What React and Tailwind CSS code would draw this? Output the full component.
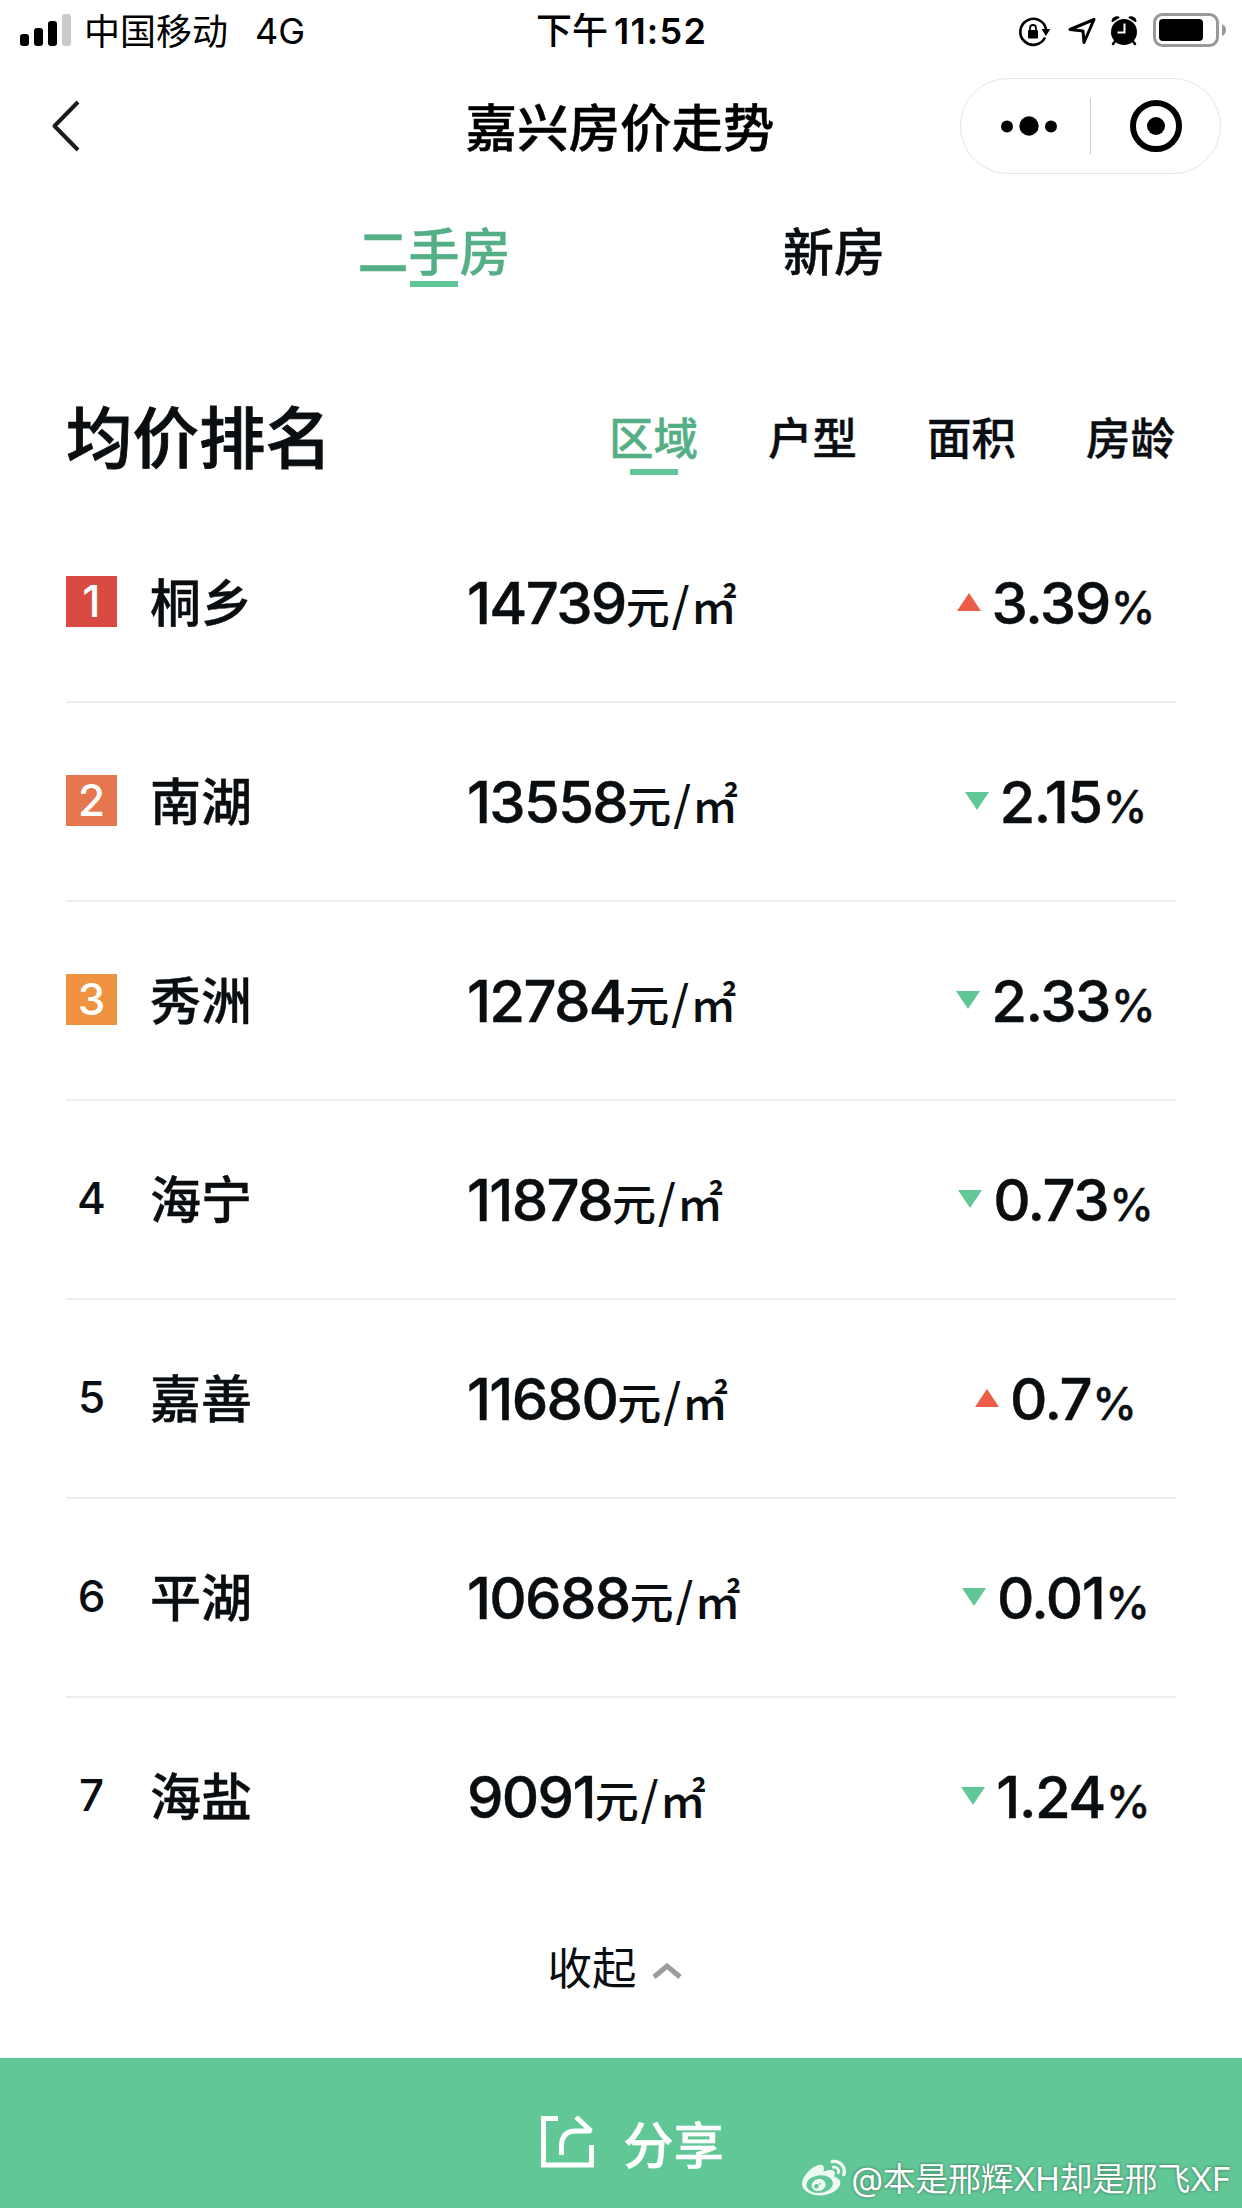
import React, { useState } from 'react';
import { FaWeibo } from 'react-icons/fa';

const districts = [
  { name: '桐乡', price: 14739, change: 3.39, up: true },
  { name: '南湖', price: 13558, change: 2.15, up: false },
  { name: '秀洲', price: 12784, change: 2.33, up: false },
  { name: '海宁', price: 11878, change: 0.73, up: false },
  { name: '嘉善', price: 11680, change: 0.7, up: true },
  { name: '平湖', price: 10688, change: 0.01, up: false },
  { name: '海盐', price: 9091, change: 1.24, up: false },
];

const filters = ['区域', '户型', '面积', '房龄'];

const badgeColors = ['bg-[#d84a42] text-white', 'bg-[#e6764d] text-white', 'bg-[#f09340] text-white'];

const StatusBar = () => (
  <div className="flex h-[62px] shrink-0 items-center text-[36px] leading-[62px] text-black">
    <svg className="ml-5 h-[62px] w-[51px] shrink-0" viewBox="0 0 51 62">
      <rect x="0" y="34" width="9" height="12" rx="3" />
      <rect x="14" y="28" width="9" height="18" rx="3" />
      <rect x="28" y="21" width="9" height="25" rx="3" />
      <rect x="42" y="14" width="9" height="32" rx="3" fill="#cbcbcb" />
    </svg>
    <span className="ml-[13px] w-[144px] pt-px">中国移动</span>
    <span className="ml-[27px] w-[50px]">4G</span>
    <span className="ml-[231px] flex w-[178px] font-semibold">
      <span className="font-medium">下午</span>
      <span className="ml-[6px] tracking-[1.2px]">11:52</span>
    </span>
    <svg className="ml-auto h-[62px] w-[224px] shrink-0" viewBox="0 0 224 62" fill="none">
      {/* rotation lock */}
      <path d="M27 37.5A13 13 0 1 1 28 29" stroke="#000" strokeWidth="2.6" />
      <path d="M23.500 29h8.800l-4.400 7z" fill="#000" />
      <rect x="10" y="30" width="10" height="8.500" rx="1" fill="#000" />
      <path d="M12 30v-2a3 3 0 0 1 6 0v2" stroke="#000" strokeWidth="1.800" />
      {/* location */}
      <path d="M76 19.500L52 29.500L65 31L66 42.500z" stroke="#000" strokeWidth="3" strokeLinejoin="round" />
      {/* alarm */}
      <circle cx="106" cy="32" r="13" fill="#000" />
      <path d="M94.500 21a4.500 4.500 0 0 1 6-3.500zM117.500 21a4.500 4.500 0 0 0-6-3.500z" fill="#000" stroke="#000" strokeWidth="2" strokeLinejoin="round" />
      <path d="M98 40l-3 4M114 40l3 4" stroke="#000" strokeWidth="2.500" strokeLinecap="round" />
      <path d="M106.500 23.500v9h-7" stroke="#fff" strokeWidth="2" />
      {/* battery */}
      <rect x="136.500" y="14.500" width="63" height="31" rx="8" stroke="#999" strokeWidth="3" />
      <rect x="141" y="19" width="44" height="22" rx="4" fill="#000" />
      <path d="M204 24v12q4-2 4-6t-4-6z" fill="#999" />
    </svg>
  </div>
);

const NavBar = () => (
  <div className="flex h-[128px] shrink-0 items-center">
    <div className="w-[261px] pl-[50px]">
      <svg width="32" height="56" viewBox="0 0 32 56" fill="none">
        <path d="M28 4L4.500 28L28 52" stroke="#1c1c1e" strokeWidth="4" strokeLinejoin="round" />
      </svg>
    </div>
    <h1 className="flex-1 pl-[19px] pt-[4px] text-center text-[51.500px] font-medium leading-[72px] text-black [-webkit-text-stroke:0.4px]">
      嘉兴房价走势
    </h1>
    <div className="mr-[21px] flex h-[96px] w-[261px] items-center rounded-full border border-[#e6e6e6]">
      <svg width="259" height="56" viewBox="0 0 259 56">
        <circle cx="46" cy="28.500" r="6" />
        <circle cx="68" cy="28" r="9.700" />
        <circle cx="90" cy="28.500" r="6" />
        <path d="M129.500 0v56" stroke="#ccc" strokeWidth="1" />
        <circle cx="195" cy="28" r="23" fill="none" stroke="#000" strokeWidth="6" />
        <circle cx="195" cy="28" r="9" />
      </svg>
    </div>
  </div>
);

const RankRow = ({ rank, item }) => (
  <li className="flex h-[199px] items-center border-b-2 border-[#eeeeee] last:border-transparent">
    <span
      className={`mb-[2px] flex h-[51px] w-[51px] shrink-0 items-center justify-center text-[44px] font-medium leading-[49px] ${badgeColors[rank - 1] || ''}`}
    >
      <span className="-mt-px">{rank}</span>
    </span>
    <span className="ml-[33px] w-[317px] shrink-0 pt-[4px] text-[51px] font-medium [-webkit-text-stroke:0.4px]">
      {item.name}
    </span>
    <span className="flex w-[368px] shrink-0 items-baseline pt-[5px] text-[58px] font-medium leading-[80px] tracking-[-1.7px] [-webkit-text-stroke:0.4px]">
      {item.price}
      <span className="text-[44px] tracking-normal [-webkit-text-stroke:0px]">
        元<span className="ml-[2px] mr-px align-[2px] font-['Noto_Sans_CJK_SC',sans-serif] text-[46px] leading-none">/</span>
        <span className="align-[1px] text-[46px] leading-none">㎡</span>
      </span>
    </span>
    <span className="flex w-[442px] shrink-0 items-center justify-center">
      <svg className="mb-px mr-[11px] shrink-0" width="24" height="18" viewBox="0 0 24 18">
        {item.up ? <path d="M12 0L24 18H0z" fill="#ea5d47" /> : <path d="M0 0H24L12 18z" fill="#61c796" />}
      </svg>
      <span className="pt-[5px] text-[58px] font-medium leading-[80px] tracking-[-1.5px] [-webkit-text-stroke:0.4px]">
        {item.change}
        <span className="ml-px text-[45px] tracking-normal">%</span>
      </span>
    </span>
  </li>
);

const App = () => {
  const [type, setType] = useState('二手房');
  const [filter, setFilter] = useState('区域');

  return (
    <div className="flex h-[2208px] w-[1242px] flex-col overflow-hidden bg-white font-[Inter,'Noto_Sans_CJK_SC',sans-serif] text-[#0a0e11]">
      <StatusBar />
      <NavBar />

      <div className="flex h-[130px] shrink-0 text-[51px] font-medium leading-[72px]">
        {['二手房', '新房'].map((t) => (
          <button
            key={t}
            onClick={() => setType(t)}
            className={`flex w-[400px] flex-col items-center pt-[27px] first:ml-[234px] ${t === type ? 'text-[#55af86]' : ''}`}
          >
            <span className="h-[64px] whitespace-nowrap [-webkit-text-stroke:0.4px]">{t}</span>
            {t === type && <span className="h-[6px] w-[48px] bg-[#61c796]"></span>}
          </button>
        ))}
      </div>

      <div className="flex h-[184px] shrink-0 justify-between pl-[66px] pr-[67px] pt-[71px]">
        <h2 className="text-[66.500px] font-medium leading-[96px] [-webkit-text-stroke:0.8px]">均价排名</h2>
        <div className="flex gap-[70px] pt-[16px] text-[44.500px] font-medium leading-[64px]">
          {filters.map((f) => (
            <button
              key={f}
              onClick={() => setFilter(f)}
              className={`flex w-[89px] flex-col items-center whitespace-nowrap ${f === filter ? 'text-[#55af86]' : ''}`}
            >
              <span className="h-[62px] [-webkit-text-stroke:0.4px]">{f}</span>
              {f === filter && <span className="h-[6px] w-[48px] bg-[#61c796]"></span>}
            </button>
          ))}
        </div>
      </div>

      <ul className="flex shrink-0 flex-col px-[66px]">
        {districts.map((item, i) => (
          <RankRow key={item.name} rank={i + 1} item={item} />
        ))}
      </ul>

      <button className="flex flex-1 items-center justify-center pb-[17px] pr-[13px] text-[44.500px]">
        收起
        <svg className="ml-[15px] mt-[3px]" width="30" height="18" viewBox="0 0 30 18" fill="none">
          <path d="M2 15L15 4L28 15" stroke="#9a9da0" strokeWidth="5" />
        </svg>
      </button>

      <div className="relative flex h-[150px] shrink-0 items-center bg-[#61c796] pl-[541px] pt-[18px] text-white">
        <svg width="54" height="52" viewBox="0 0 54 52" fill="none" stroke="#fff" strokeWidth="5">
          <path d="M17 2.500H2.500V49H50.500V29" />
          <path d="M20.500 39V30Q20.500 15 35 15H50L35 1" strokeLinejoin="bevel" />
        </svg>
        <span className="ml-[28px] pt-[8px] text-[50.500px] font-medium [-webkit-text-stroke:0.4px]">分享</span>
        <div className="absolute bottom-[6px] right-[11px] flex items-center text-[33px] leading-[46px] tracking-[-0.4px] [text-shadow:0_0_3px_rgba(0,0,0,0.5)]">
          <FaWeibo className="mr-[5px] h-[44px] w-[44px] opacity-90" />
          <span>@本是邢辉XH却是邢飞XF</span>
        </div>
      </div>
    </div>
  );
};

export default App;
